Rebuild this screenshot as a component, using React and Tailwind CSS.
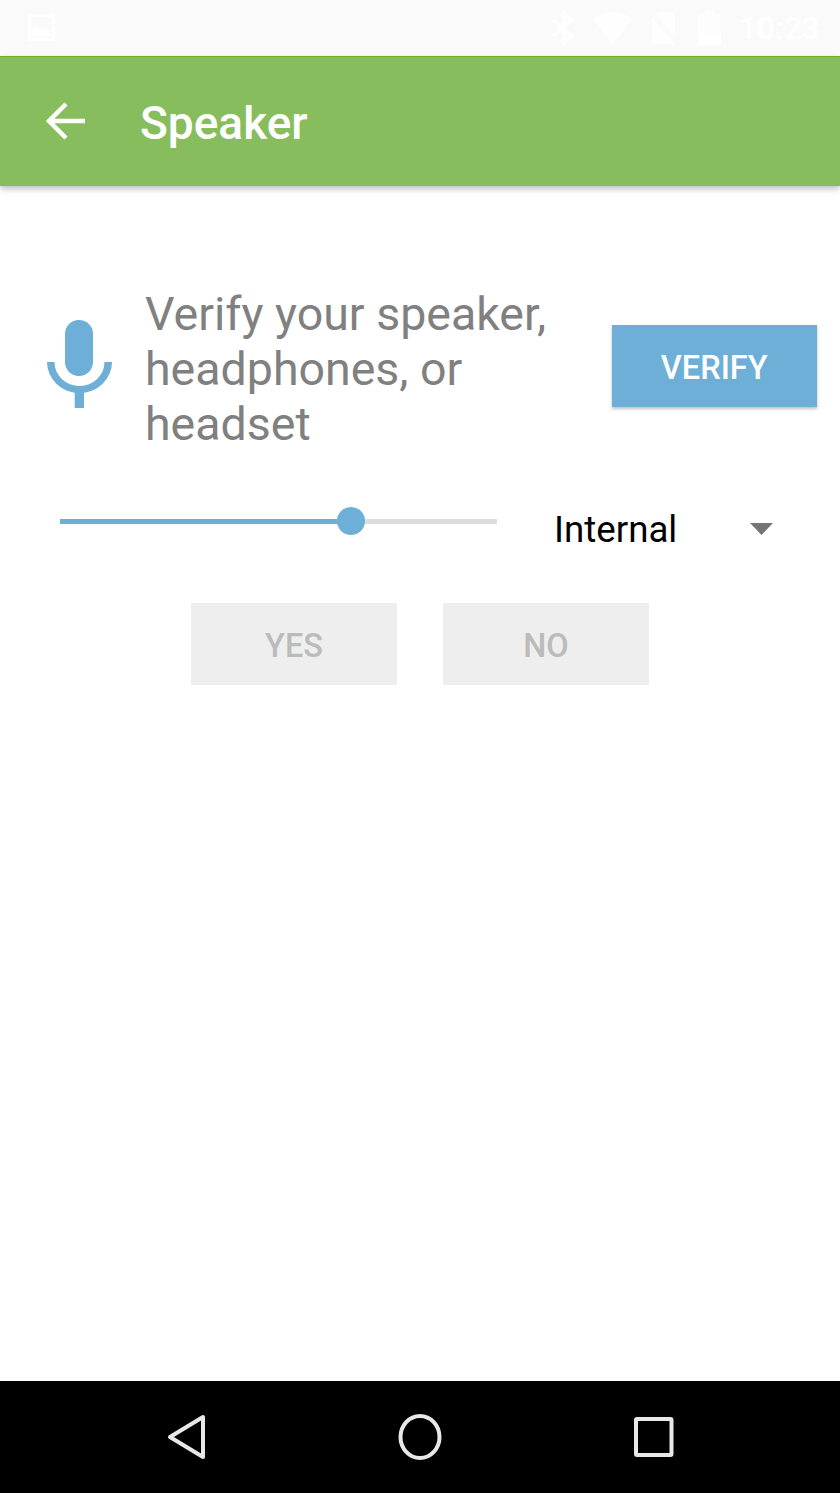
import React from 'react';

const StatusBar = () => (
  <div className="h-14 shrink-0 bg-[#fafafa] flex items-center pl-7 pr-5 text-white">
    <svg width="28" height="28" viewBox="0 0 28 28" className="mt-[-1px]">
      <path d="M0 0h27v27H0z M3 3v21h21V3z" fill="#fff" fillRule="evenodd" />
      <path d="M4 22v-5l4-5 3 3 1-1 3 3 4-3 3 4v4z" fill="#fff" />
    </svg>
    <div className="ml-auto flex items-center">
      <svg width="22" height="34" viewBox="0 0 22 34" fill="none" stroke="#fff" strokeWidth="3">
        <path d="M1 9l19 16-8 7V2l8 7L1 25" />
      </svg>
      <svg width="39" height="33" viewBox="0 0 39 33" className="ml-[19px]">
        <path d="M0 7C11-2 28-2 39 7L19.500 33z" fill="#fff" fillOpacity="0.8" />
      </svg>
      <svg width="28" height="32" viewBox="0 0 28 32" className="ml-[17px]">
        <path d="M10 0h12a4 4 0 0 1 4 4v22L7 3zM3 5l23 27H6a3 3 0 0 1-3-3z" fill="#fff" fillOpacity="0.7" />
      </svg>
      <svg width="23" height="34" viewBox="0 0 23 34" className="ml-[21px]">
        <path d="M7 0h9v3h7v31H0V3h7z" fill="#fff" fillOpacity="0.6" />
        <path d="M0 22h23v12H0z" fill="#fff" />
      </svg>
      <span className="ml-[18px] font-['Roboto',sans-serif] font-medium text-[32px] leading-none">10:23</span>
    </div>
  </div>
);

const Toolbar = () => (
  <div className="relative z-10 h-[130px] shrink-0 bg-[#87bd5d] border-t border-[#6ab21b] shadow-[0_3px_6px_rgba(0,0,0,0.25)] flex items-center pl-[46px]">
    <svg width="39" height="38" viewBox="0 0 39 38" fill="none" stroke="#fff" strokeWidth="4.500" className="mt-[-2px]">
      <path d="M39 19H3M20 2L3 19l17 17" />
    </svg>
    <h1 className="ml-[55px] mt-[2px] font-['Roboto',sans-serif] font-medium text-[46px] text-white leading-none">Speaker</h1>
  </div>
);

const MicIcon = () => (
  <svg width="65" height="88" viewBox="0 0 65 88" fill="#6dafd6" className="shrink-0 mt-[33px]">
    <rect x="18" y="0" width="28" height="56" rx="14" />
    <path d="M0 42A32.500 31 0 0 0 65 42H57.500A25 24 0 0 1 7.500 42Z" />
    <rect x="27.700" y="70" width="9.300" height="18" />
  </svg>
);

const Button = ({ label, disabled }) => (
  <button
    className={
      disabled
        ? "w-[205.500px] h-[82px] pt-[4px] bg-[#eeeeee] text-[#bbbbbb] font-['Roboto',sans-serif] font-medium text-[32.500px]"
        : "w-[205.500px] h-[82px] pt-[4px] bg-[#6dafd6] text-white font-['Roboto',sans-serif] font-medium text-[32.500px] shadow-[0_2px_3px_rgba(0,0,0,0.25)]"
    }
  >
    {label}
  </button>
);

const Body = () => (
  <div className="flex-1 bg-white">
    <div className="flex items-start pl-[47px] pr-[23px] pt-[101px]">
      <MicIcon />
      <p className="ml-[33px] w-[440px] text-[46.500px] leading-[55px] text-[#808080] font-['Roboto',sans-serif]">
        Verify your speaker,
        <br />
        headphones, or
        <br />
        headset
      </p>
      <div className="ml-auto mt-[38px]">
        <Button label="VERIFY" />
      </div>
    </div>
    <div className="flex items-start pl-[60px] mt-[55px]">
      <div className="relative w-[437px] h-[28px] flex items-center">
        <div className="h-[5px] w-full bg-[#dddddd]" />
        <div className="absolute left-0 h-[5px] w-[291px] bg-[#6dafd6]" />
        <div className="absolute left-[277px] w-[28px] h-[28px] rounded-full bg-[#6dafd6]" />
      </div>
      <span className="ml-[57px] mt-[3px] font-['Roboto',sans-serif] text-[36.700px] leading-[40px] text-black">Internal</span>
      <svg width="23" height="12" viewBox="0 0 23 12" fill="#757575" className="ml-[73px] mt-[16px]">
        <path d="M0 0h23L11.500 12z" />
      </svg>
    </div>
    <div className="flex justify-center gap-[46.500px] mt-[53px]">
      <Button label="YES" disabled />
      <Button label="NO" disabled />
    </div>
  </div>
);

const NavBar = () => (
  <div className="h-[112px] shrink-0 bg-black flex items-start pt-[33px] pl-[167px]">
    <svg width="39" height="46" viewBox="0 0 39 46" fill="none" stroke="#e8e8e8" strokeWidth="4" strokeLinejoin="round">
      <path d="M36 3v40L3 23z" />
    </svg>
    <svg width="44" height="46" viewBox="0 0 44 46" fill="none" stroke="#e8e8e8" strokeWidth="4" className="ml-[192px]">
      <ellipse cx="22" cy="23" rx="19.500" ry="21" />
    </svg>
    <svg width="40" height="40" viewBox="0 0 40 40" fill="none" stroke="#e8e8e8" strokeWidth="4" strokeLinejoin="round" className="ml-[192px] mt-[3px]">
      <rect x="2" y="2" width="35.500" height="36" rx="1" />
    </svg>
  </div>
);

export default function App() {
  return (
    <div className="w-[840px] h-[1493px] flex flex-col overflow-hidden bg-white">
      <StatusBar />
      <Toolbar />
      <Body />
      <NavBar />
    </div>
  );
}
